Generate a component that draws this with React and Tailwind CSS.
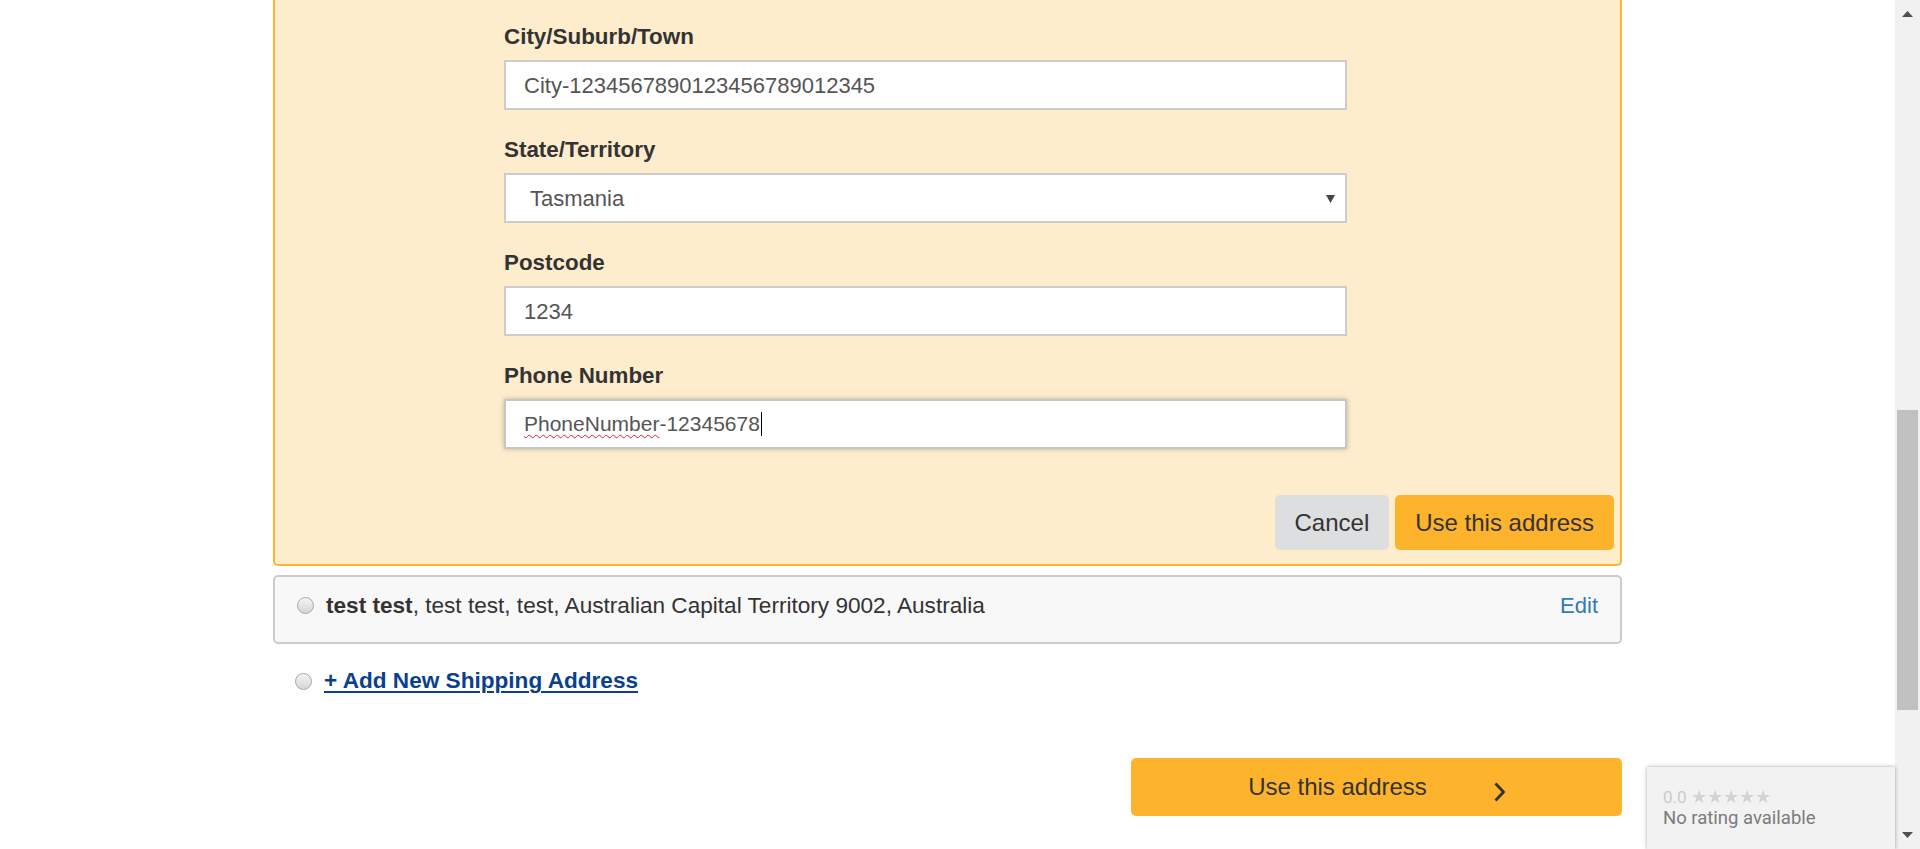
import React from "react";

function Radio() {
  return (
    <span className="inline-block w-[17px] h-[17px] rounded-full border border-[#a8a8a8] bg-gradient-to-b from-[#f4f4f4] to-[#d6d6d6] shrink-0" />
  );
}

function Field({ label, children, first }) {
  return (
    <div className={first ? "" : "mt-[24px]"}>
      <div className="text-[22.4px] leading-[31px] font-bold text-[#333] mb-[8px]">{label}</div>
      {children}
    </div>
  );
}

function Box({ children, focused, extra = "" }) {
  return (
    <div
      className={
        "h-[50px] bg-white border-2 flex items-center text-[22px] text-[#555] " +
        (focused
          ? "border-[#c3c8cb] shadow-[0_0_5px_rgba(0,0,0,0.25)] "
          : "border-[#cccccc] ") +
        extra
      }
    >
      {children}
    </div>
  );
}

export default function App() {
  return (
    <div
      className="w-[1920px] h-[849px] overflow-hidden flex bg-white"
      style={{ fontFamily: '"Liberation Sans", Arial, Helvetica, sans-serif' }}
    >
      <div className="flex-1 relative">
        <div className="w-[1349px] mx-auto">
          {/* Yellow address form panel */}
          <div className="bg-[#feedcc] border-2 border-t-0 border-[#fdb42e] rounded-b-[5px] pt-[21px] pb-[14px]">
            <div className="ml-[229px] w-[843px]">
              <Field label="City/Suburb/Town" first>
                <Box extra="pl-[18px]">City-1234567890123456789012345</Box>
              </Field>
              <Field label="State/Territory">
                <Box extra="pl-[24px] pr-[10px] justify-between">
                  <span>Tasmania</span>
                  <svg width="9" height="9" viewBox="0 0 9 9">
                    <polygon points="0,1 9,1 4.5,9" fill="#444" />
                  </svg>
                </Box>
              </Field>
              <Field label="Postcode">
                <Box extra="pl-[18px]">1234</Box>
              </Field>
              <Field label="Phone Number">
                <Box focused extra="pl-[18px] !text-[21px]">
                  <span className="underline decoration-wavy decoration-[#e02020] decoration-1 underline-offset-[3px]">
                    PhoneNumber
                  </span>
                  <span>-12345678</span>
                  <span className="inline-block w-px h-[24px] bg-black ml-[1px]" />
                </Box>
              </Field>
            </div>
            <div className="flex justify-end gap-[6px] mt-[46px] mr-[6px]">
              <button className="h-[55px] px-[20px] rounded-[5px] bg-[#dcdedf] text-[24px] text-[#333]">
                Cancel
              </button>
              <button className="h-[55px] px-[20px] rounded-[5px] bg-[#feb32c] text-[24px] text-[#333]">
                Use this address
              </button>
            </div>
          </div>

          {/* Existing address */}
          <div className="mt-[9px] h-[69px] bg-[#f8f8f8] border-2 border-[#cccccc] rounded-[5px] flex items-center justify-between pl-[22px] pr-[22px] pb-[8px] text-[22.6px] text-[#333]">
            <div className="flex items-center gap-[12px]">
              <Radio />
              <span>
                <b>test test</b>, test test, test, Australian Capital Territory 9002, Australia
              </span>
            </div>
            <span className="text-[#337ab7] text-[22px]">Edit</span>
          </div>

          {/* Add new */}
          <div className="mt-[22px] h-[30px] flex items-center gap-[12px] pl-[22px]">
            <Radio />
            <span className="text-[22.6px] font-bold text-[#0b3f8f] underline underline-offset-[3px] decoration-2">
              + Add New Shipping Address
            </span>
          </div>

          {/* Main button */}
          <div className="flex justify-end mt-[62px]">
            <button className="w-[491px] h-[58px] rounded-[5px] bg-[#feb32c] flex items-center justify-center text-[24px] text-[#333]">
              <span>Use this address</span>
              <svg className="ml-[67px] mt-[10px]" width="11" height="20" viewBox="0 0 11 20">
                <polyline points="1.5,1.5 9.5,10 1.5,18.5" fill="none" stroke="#333" strokeWidth="2.8" />
              </svg>
            </button>
          </div>
        </div>

        {/* Rating badge */}
        <div
          className="absolute right-0 bottom-0 w-[248px] h-[82px] bg-[#f2f2f2] shadow-[0_0_4px_rgba(0,0,0,0.35)] pt-[20px] pl-[16px]"
          style={{ fontFamily: "Roboto, Arial, sans-serif" }}
        >
          <div className="text-[17px] leading-[20px] text-[#cacaca]">
            0.0 <span className="text-[#d2d2d2] text-[18px]">★★★★★</span>
          </div>
          <div className="text-[18.5px] leading-[22px] text-[#7b7b7b]">No rating available</div>
        </div>
      </div>

      {/* Scrollbar */}
      <div className="w-[25px] bg-[#f1f1f1] flex flex-col">
        <div className="h-[17px] flex justify-center items-end">
          <svg width="11" height="6" viewBox="0 0 11 6">
            <polygon points="5.5,0 11,6 0,6" fill="#505050" />
          </svg>
        </div>
        <div className="mt-[393px] h-[300px] mx-[2px] bg-[#c1c1c1]" />
        <div className="flex-1" />
        <div className="h-[17px] flex justify-center items-start">
          <svg width="11" height="6" viewBox="0 0 11 6">
            <polygon points="0,0 11,0 5.5,6" fill="#505050" />
          </svg>
        </div>
      </div>
    </div>
  );
}
